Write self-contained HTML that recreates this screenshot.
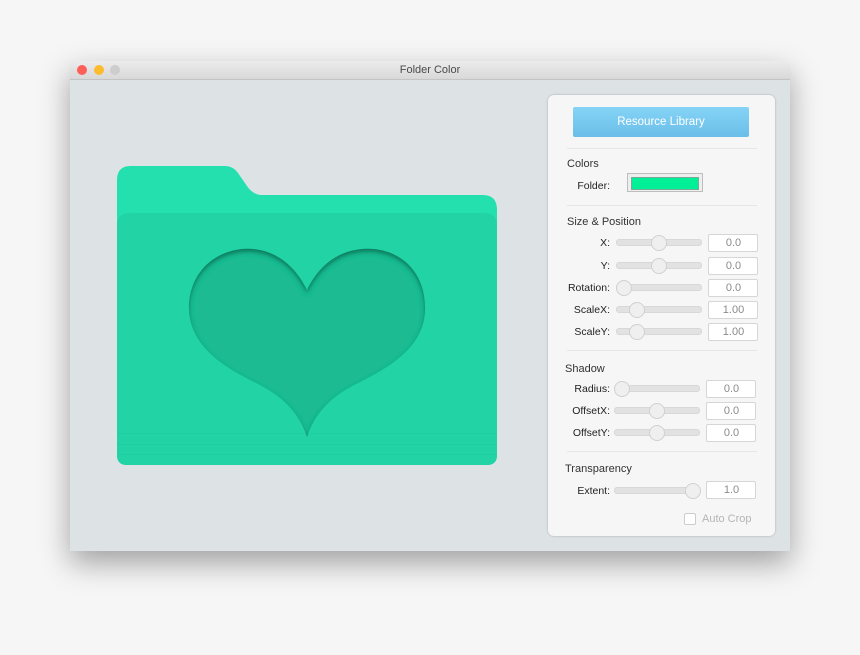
<!DOCTYPE html>
<html><head><meta charset="utf-8"><style>
body{margin:0;width:860px;height:655px;background:#f6f6f6;font-family:"Liberation Sans",sans-serif;position:relative;overflow:hidden}
.win{position:absolute;left:70px;top:61px;width:720px;height:490px;box-shadow:0 12px 30px rgba(0,0,0,.35);border-radius:4px 4px 0 0;overflow:hidden}
.tb{height:18px;background:linear-gradient(#ececec,#d8d8d8);border-bottom:1px solid #c4c4c4;text-align:center;font-size:11px;line-height:18px;color:#4a4a4a;position:relative}
.dot{position:absolute;top:4px;width:10px;height:10px;border-radius:50%}
.content{position:absolute;top:19px;left:0;right:0;bottom:0;background:#dde3e5}
.panel{position:absolute;left:548px;top:95px;width:227px;height:441px;background:#f6f6f6;border-radius:6px;box-shadow:0 0 2px rgba(0,0,0,.25)}
.btn{position:absolute;left:25px;top:12px;width:176px;height:30px;background:linear-gradient(#85d4f7,#6bbee8);border-radius:2px;color:#fff;font-size:11.5px;text-align:center;line-height:31px}
.hr{position:absolute;left:19px;width:190px;height:1px;background:#e6e6e6}
.h{position:absolute;font-size:11px;color:#333}
.l{position:absolute;font-size:10.5px;color:#222;text-align:right;width:62px}
.tr{position:absolute;width:84px;height:5px;background:#e2e2e2;border-radius:3px;border:1px solid #d8d8d8}
.kn{position:absolute;top:-5px;width:14px;height:14px;border-radius:50%;background:#efefef;border:1px solid #d0d0d0}
.in{position:absolute;width:47px;height:16px;background:#fff;border:1px solid #d6d6d6;border-radius:2px;font-size:11px;color:#8a8a8a;line-height:17px;padding-left:1px;text-align:center}
</style></head><body>
<div class="win">
<div class="tb"><div class="dot" style="left:7px;background:#fc5f57"></div><div class="dot" style="left:24px;background:#fdbc2e"></div><div class="dot" style="left:40px;background:#cdcdcd"></div>Folder Color</div>
<div class="content"></div>
</div>
<svg style="position:absolute;left:0;top:0" width="860" height="655">
<defs>
<filter id="inner" x="-10%" y="-10%" width="120%" height="120%">
<feOffset dy="3" in="SourceAlpha" result="o"/><feGaussianBlur in="o" stdDeviation="2.5" result="b"/>
<feComposite in="SourceAlpha" in2="b" operator="out" result="sh"/>
<feFlood flood-color="#0b5e44" flood-opacity=".85"/><feComposite in2="sh" operator="in" result="s"/>
<feMerge><feMergeNode in="SourceGraphic"/><feMergeNode in="s"/></feMerge>
</filter>
</defs>
<path d="M117,180 Q117,166 131,166 L225,166 Q233,166 238,173 L247,186 Q253,195 262,195 L483,195 Q497,195 497,210 L497,455 Q497,465 487,465 L127,465 Q117,465 117,455 Z" fill="#24e0ae"/>
<path d="M117,225 Q117,213 130,213 L484,213 Q497,213 497,226 L497,455 Q497,465 487,465 L127,465 Q117,465 117,455 Z" fill="#22d3a6"/>
<rect x="117" y="433" width="380" height="1" fill="#20cda0" opacity=".7"/><rect x="117" y="444" width="380" height="1" fill="#20cda0" opacity=".7"/><rect x="117" y="454" width="380" height="1" fill="#20cda0" opacity=".7"/>
<path filter="url(#inner)" d="M307,290 C290,255 262,247 242,249 C207,253 188,280 189,310 C191,350 230,370 260,385 C285,398 300,415 307,437 C314,415 329,398 354,385 C384,370 424,350 425,310 C426,280 409,253 374,249 C352,247 324,255 307,290 Z" fill="#1dbb92"/>
</svg>
<div class="panel">
<div class="btn">Resource Library</div>
<div class="hr" style="top:53px"></div>
<div class="h" style="left:19px;top:63px">Colors</div>
<div class="l" style="left:0;top:85px">Folder:</div>
<div style="position:absolute;left:79px;top:78px;width:74px;height:17px;border:1px solid #bdbdbd;background:#eee"><div style="margin:3px;height:11px;background:#00ef97;border:1px solid #7a9"></div></div>
<div class="hr" style="top:110px"></div>
<div class="h" style="left:19px;top:121px">Size &amp; Position</div>
<div class="l" style="top:142px">X:</div><div class="tr" style="left:68px;top:144px"><div class="kn" style="left:34px"></div></div><div class="in" style="left:160px;top:139px">0.0</div>
<div class="l" style="top:165px">Y:</div><div class="tr" style="left:68px;top:167px"><div class="kn" style="left:34px"></div></div><div class="in" style="left:160px;top:162px">0.0</div>
<div class="l" style="top:187px">Rotation:</div><div class="tr" style="left:68px;top:189px"><div class="kn" style="left:-1px"></div></div><div class="in" style="left:160px;top:184px">0.0</div>
<div class="l" style="top:209px">ScaleX:</div><div class="tr" style="left:68px;top:211px"><div class="kn" style="left:12px"></div></div><div class="in" style="left:160px;top:206px">1.00</div>
<div class="l" style="top:231px">ScaleY:</div><div class="tr" style="left:68px;top:233px"><div class="kn" style="left:12px"></div></div><div class="in" style="left:160px;top:228px">1.00</div>
<div class="hr" style="top:255px"></div>
<div class="h" style="left:17px;top:268px">Shadow</div>
<div class="l" style="top:288px">Radius:</div><div class="tr" style="left:66px;top:290px"><div class="kn" style="left:-1px"></div></div><div class="in" style="left:158px;top:285px">0.0</div>
<div class="l" style="top:310px">OffsetX:</div><div class="tr" style="left:66px;top:312px"><div class="kn" style="left:34px"></div></div><div class="in" style="left:158px;top:307px">0.0</div>
<div class="l" style="top:332px">OffsetY:</div><div class="tr" style="left:66px;top:334px"><div class="kn" style="left:34px"></div></div><div class="in" style="left:158px;top:329px">0.0</div>
<div class="hr" style="top:356px"></div>
<div class="h" style="left:17px;top:368px">Transparency</div>
<div class="l" style="top:390px">Extent:</div><div class="tr" style="left:66px;top:392px"><div class="kn" style="left:70px"></div></div><div class="in" style="left:158px;top:386px">1.0</div>
<div style="position:absolute;left:136px;top:418px;width:10px;height:10px;border:1px solid #ccc;border-radius:2px;background:#fff"></div>
<div style="position:absolute;left:154px;top:418px;font-size:11px;color:#b5b5b5">Auto Crop</div>
</div>
</body></html>
